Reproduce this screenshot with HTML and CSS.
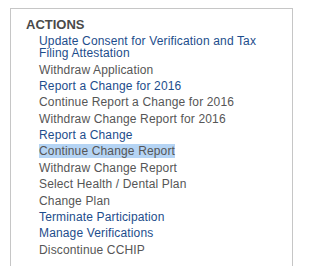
FILE: index.html
```html
<!DOCTYPE html>
<html>
<head>
<meta charset="utf-8">
<link rel="stylesheet" href="styles.css">
</head>
<body>
<div class="panel">
  <h3 class="title">ACTIONS</h3>
  <ul class="actions">
    <li><a class="link">Update Consent for Verification and Tax Filing Attestation</a></li>
    <li><span class="off">Withdraw Application</span></li>
    <li><a class="link">Report a Change for 2016</a></li>
    <li><span class="off">Continue Report a Change for 2016</span></li>
    <li><span class="off">Withdraw Change Report for 2016</span></li>
    <li><a class="link">Report a Change</a></li>
    <li><span class="off selected">Continue Change Report</span></li>
    <li><span class="off">Withdraw Change Report</span></li>
    <li><span class="off">Select Health / Dental Plan</span></li>
    <li><span class="off">Change Plan</span></li>
    <li><a class="link">Terminate Participation</a></li>
    <li><a class="link">Manage Verifications</a></li>
    <li><span class="off">Discontinue CCHIP</span></li>
  </ul>
</div>
</body>
</html>
```
FILE: styles.css
```css
html, body {
  margin: 0;
  padding: 0;
  background: #ffffff;
}
body {
  font-family: "Liberation Sans", Arial, sans-serif;
}
.panel {
  margin: 8px 0 0 10px;
  width: 266px;
  height: 249px;
  border: 1px solid #c6c6c6;
  border-bottom: none;
  padding: 8px 0 0 15px;
  background: #ffffff;
}
.title {
  margin: 0 0 1px 0;
  font-size: 13px;
  line-height: 15px;
  font-weight: bold;
  color: #4a4a4a;
}
.actions {
  list-style: none;
  margin: 0;
  padding: 0 20px 0 13px;
}
.actions li {
  font-size: 12px;
  line-height: 12px;
  letter-spacing: 0.15px;
  padding: 2.2px 0;
}
.link {
  color: #1d4d8c;
  text-decoration: none;
}
.off {
  color: #565656;
}
.selected {
  background: #b5d4f4;
}
```
